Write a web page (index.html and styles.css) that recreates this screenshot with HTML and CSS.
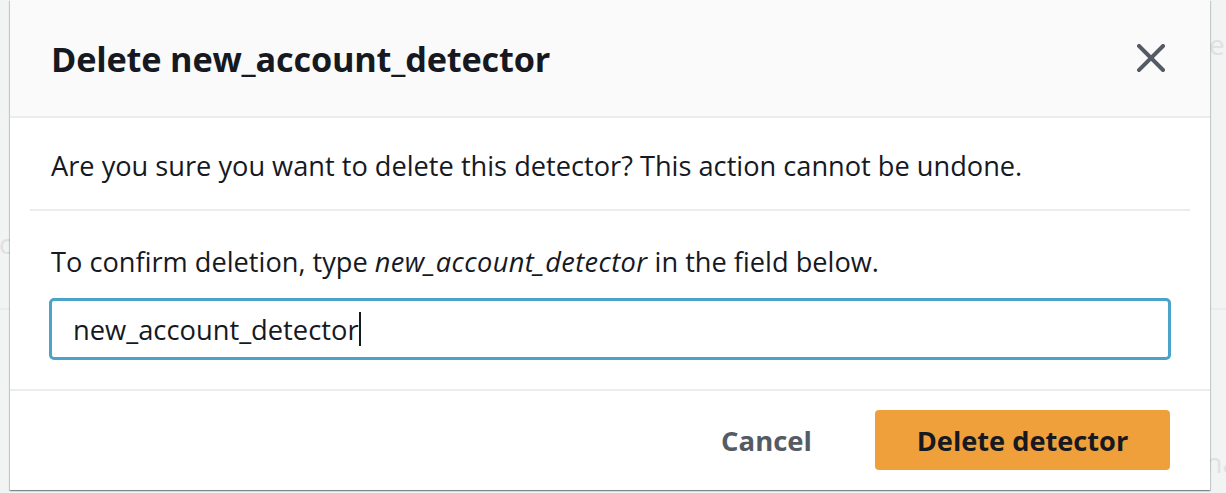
FILE: index.html
```html
<!DOCTYPE html>
<html>
<head>
<meta charset="utf-8">
<link rel="stylesheet" href="styles.css">
</head>
<body>
<div class="page">
  <div class="bg-row bg-row-1"><span class="bg-right">es</span></div>
  <div class="bg-row bg-row-2"><span class="bg-left">ic</span></div>
  <div class="bg-row bg-row-3"><span class="bg-right">na</span></div>
</div>
<div class="modal">
  <div class="modal-header">
    <h2 class="modal-title">Delete new_account_detector</h2>
    <button class="close-btn" aria-label="Close">
      <svg width="28" height="28" viewBox="0 0 28 28"><path d="M2 2 L26 26 M26 2 L2 26" stroke="#545b64" stroke-width="4" stroke-linecap="square" fill="none"/></svg>
    </button>
  </div>
  <div class="modal-section first">
    <p class="text">Are you sure you want to delete this detector? This action cannot be undone.</p>
  </div>
  <div class="divider"></div>
  <div class="modal-section second">
    <p class="text">To confirm deletion, type <em>new_account_detector</em> in the field below.</p>
    <div class="input"><span class="input-value">new_account_detector</span><span class="caret"></span></div>
  </div>
  <div class="modal-footer">
    <button class="btn-link">Cancel</button>
    <button class="btn-primary">Delete detector</button>
  </div>
</div>
</body>
</html>
```
FILE: styles.css
```css
html, body {
  margin: 0;
  padding: 0;
}
body {
  width: 1226px;
  height: 493px;
  overflow: hidden;
  background: #f2f3f3;
  font-family: "Open Sans", "Noto Sans", sans-serif;
  color: #16191f;
  position: relative;
}
.page {
  display: flex;
  flex-direction: column;
  height: 493px;
}
.bg-row {
  display: flex;
  align-items: center;
  justify-content: space-between;
  font-size: 28px;
  color: #dfe2e2;
  border-bottom: 2px solid #eaeded;
}
.bg-row-1 { height: 88px; justify-content: flex-end; border-bottom: none; }
.bg-row-2 { height: 222px; padding-top: 90px; box-sizing: border-box; }
.bg-row-3 { height: 183px; padding-top: 120px; box-sizing: border-box; justify-content: flex-end; border-bottom: none; }
.bg-left { margin-left: -8px; }
.bg-right { margin-right: -12px; }

.modal {
  position: absolute;
  left: 10px;
  top: 0;
  width: 1200px;
  height: 490px;
  background: #fff;
  box-shadow: 0 1px 1px 0 rgba(0,28,36,0.3), 1px 1px 1px 0 rgba(0,28,36,0.15), -1px 1px 1px 0 rgba(0,28,36,0.15);
  display: flex;
  flex-direction: column;
}
.modal-header {
  height: 116px;
  background: #fafafa;
  border-bottom: 2px solid #eaeded;
  display: flex;
  align-items: center;
  justify-content: space-between;
  padding: 0 45px 0 41px;
  flex-shrink: 0;
}
.modal-title {
  margin: 0;
  font-size: 34.3px;
  font-weight: 700;
  letter-spacing: -0.2px;
  color: #16191f;
}
.close-btn {
  background: none;
  border: none;
  padding: 0;
  width: 28px;
  height: 28px;
  display: flex;
  margin-top: 0;
}
.text {
  margin: 0;
  font-size: 27.2px;
  line-height: 40px;
  color: #16191f;
}
.text em { font-style: italic; letter-spacing: 0.4px; }
.modal-section {
  padding: 0 39px 0 41px;
}
.modal-section.first {
  height: 91px;
  padding-top: 28px;
  box-sizing: border-box;
}
.divider {
  height: 2px;
  background: #eaeded;
  margin: 0 20px;
  flex-shrink: 0;
}
.modal-section.second {
  height: 180px;
  padding-top: 31px;
  padding-left: 39px;
  box-sizing: border-box;
  border-bottom: 2px solid #eaeded;
}
.modal-section.second .text { padding-left: 2px; }
.input {
  margin-top: 16px;
  height: 62px;
  box-sizing: border-box;
  border: 3px solid #4ba3c9;
  border-radius: 5px;
  display: flex;
  align-items: center;
  padding-left: 21px;
  font-size: 27.3px;
  color: #16191f;
}
.caret {
  display: inline-block;
  width: 2px;
  height: 34px;
  background: #16191f;
  margin-left: 0;
}
.modal-footer {
  display: flex;
  justify-content: flex-end;
  align-items: center;
  padding: 19px 40px 0 0;
  gap: 63px;
}
.btn-link {
  background: none;
  border: none;
  font-family: inherit;
  font-size: 27.5px;
  font-weight: 700;
  color: #545b64;
  padding: 0;
}
.btn-primary {
  width: 295px;
  height: 60px;
  background: #f0a03a;
  border: none;
  border-radius: 4px;
  font-family: inherit;
  font-size: 27.2px;
  font-weight: 700;
  color: #16191f;
}
```
